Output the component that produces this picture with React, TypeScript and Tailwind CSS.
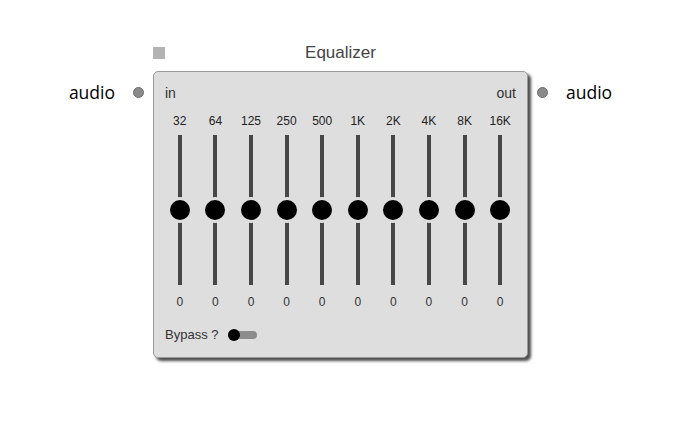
import React from 'react';

const BANDS = ['32', '64', '125', '250', '500', '1K', '2K', '4K', '8K', '16K'];

const Port: React.FC<{ side: 'left' | 'right' }> = ({ side }) => (
  <div
    className={`absolute top-[10px] flex items-center gap-[18px] ${
      side === 'left' ? 'right-full mr-[10px] flex-row-reverse' : 'left-full ml-[10px]'
    }`}
  >
    <span className="w-[11px] h-[11px] rounded-full bg-[#8a8a8a] border border-[#6e6e6e]" />
    <span className="text-[17.5px] leading-[20px] text-black font-['Open_Sans',sans-serif]">audio</span>
  </div>
);

const Band: React.FC<{ label: string }> = ({ label }) => (
  <div className="w-[35.6px] flex flex-col items-center">
    <div className="text-[12px] leading-[14px] text-[#222]">{label}</div>
    <div className="relative mt-[7px] h-[150px] w-[26px] flex justify-center">
      <div className="w-[4px] h-full bg-[#474747]" />
      <div className="absolute top-[62px] left-0 w-[26px] h-[26px] rounded-full bg-black border-[3px] border-[#dedede]" />
    </div>
    <div className="mt-[10px] text-[12px] leading-[14px] text-[#333]">0</div>
  </div>
);

const App: React.FC = () => {
  return (
    <div className="w-[679px] h-[421px] bg-white relative font-['Liberation_Sans',Arial,sans-serif]">
      <div className="absolute left-[153px] top-[45px] w-[375px]">
        <div className="relative h-[26px]">
          <span className="absolute left-0 top-[2px] w-[12px] h-[12px] bg-[#b3b3b3]" />
          <div className="text-center text-[17px] leading-[16px] text-[#444]">Equalizer</div>
        </div>

        <div className="relative h-[287px] rounded-[5px] border border-[#9a9a9a] bg-[#dedede] shadow-[3px_3px_3px_rgba(0,0,0,0.7)]">
          <Port side="left" />
          <Port side="right" />

          <div className="pt-[13px] px-[11px] flex justify-between text-[14px] leading-[16px] text-[#333]">
            <span>in</span>
            <span>out</span>
          </div>

          <div className="mt-[13px] pl-[8px] flex">
            {BANDS.map((b) => (
              <Band key={b} label={b} />
            ))}
          </div>

          <div className="mt-[19px] pl-[11px] flex items-center text-[13px] leading-[14px] text-[#333]">
            <span>Bypass ?</span>
            <div className="relative ml-[10px] w-[29px] h-[12px] flex items-center">
              <div className="w-full h-[8px] rounded-full bg-[#8c8c8c]" />
              <div className="absolute left-0 top-0 w-[12px] h-[12px] rounded-full bg-black" />
            </div>
          </div>
        </div>
      </div>
    </div>
  );
};

export default App;
